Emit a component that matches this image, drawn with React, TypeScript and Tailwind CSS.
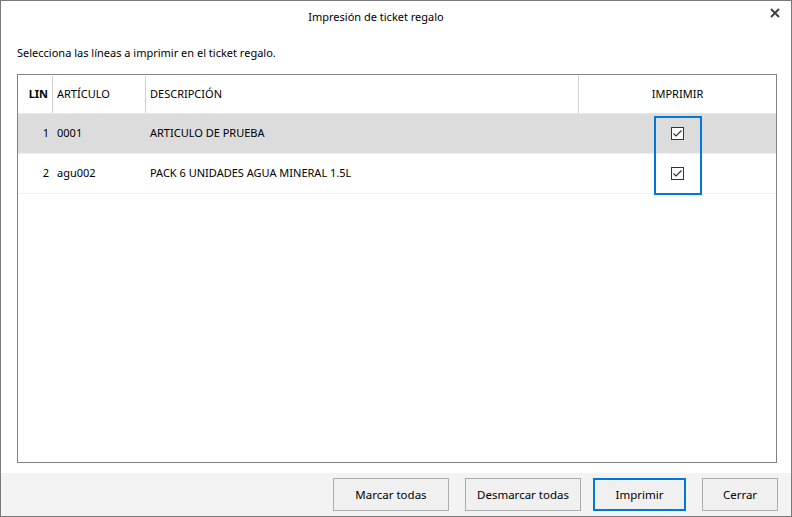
import React from "react";

type Row = { lin: number; articulo: string; descripcion: string; checked: boolean };

const rows: Row[] = [
  { lin: 1, articulo: "0001", descripcion: "ARTICULO DE PRUEBA", checked: true },
  { lin: 2, articulo: "agu002", descripcion: "PACK 6 UNIDADES AGUA MINERAL 1.5L", checked: true },
];

const CheckBox: React.FC<{ checked: boolean }> = ({ checked }) => (
  <div className="w-[13px] h-[13px] border border-[#333333] bg-white flex items-center justify-center">
    {checked && (
      <svg width="11" height="11" viewBox="0 0 11 11">
        <path d="M1.5 5.5 L4 8 L9.5 2.5" fill="none" stroke="#333333" strokeWidth="1.2" />
      </svg>
    )}
  </div>
);

const FooterButton: React.FC<{ label: string; className?: string; focused?: boolean }> = ({
  label,
  className = "",
  focused,
}) => (
  <button
    className={`h-[33px] text-[11.5px] text-black bg-[#f0f0f0] border ${
      focused ? "border-2 border-[#0078d7]" : "border-[#adadad]"
    } ${className}`}
  >
    {label}
  </button>
);

export default function App() {
  return (
    <div
      className="w-[792px] h-[517px] border border-[#7a7a7a] bg-white flex flex-col text-black"
      style={{ fontFamily: '"Noto Sans", "Open Sans", sans-serif' }}
    >
      {/* Title bar */}
      <div className="h-[31px] flex items-center relative">
        <div className="flex-1 flex justify-center pr-[40px] text-[11px] pt-[1px]">Impresión de ticket regalo</div>
        <svg className="absolute right-[11px] top-[7px]" width="10" height="10" viewBox="0 0 10 10">
          <path d="M1 1 L9 9 M9 1 L1 9" stroke="#3c3c3c" strokeWidth="1.8" />
        </svg>
      </div>

      {/* Instructions */}
      <div className="h-[42px] flex items-center px-[16px] pt-[1px] text-[11px]">
        Selecciona las líneas a imprimir en el ticket regalo.
      </div>

      {/* Grid */}
      <div className="ml-[16px] mr-[14px] h-[389px] border border-[#828282] flex flex-col text-[11px]">
        <div className="h-[39px] flex border-b border-[#e6e6e6] pt-[1px]">
          <div className="w-[35px] border-r border-[#d0d0d0] flex items-center justify-end pr-[4px] font-bold">
            LIN
          </div>
          <div className="w-[93px] border-r border-[#d0d0d0] flex items-center pl-[4px]">ARTÍCULO</div>
          <div className="w-[433px] border-r border-[#d0d0d0] flex items-center pl-[4px]">DESCRIPCIÓN</div>
          <div className="flex-1 flex items-center justify-center">IMPRIMIR</div>
        </div>
        <div className="relative">
          {rows.map((r, i) => (
            <div
              key={r.lin}
              className={`h-[40px] flex border-b border-[#f0f0f0] ${i === 0 ? "bg-[#dcdcdc]" : "bg-white"}`}
            >
              <div className="w-[35px] flex items-center justify-end pr-[4px]">{r.lin}</div>
              <div className="w-[93px] flex items-center pl-[4px]">{r.articulo}</div>
              <div className="w-[433px] flex items-center pl-[4px]">{r.descripcion}</div>
              <div className="flex-1 flex items-center justify-center">
                <CheckBox checked={r.checked} />
              </div>
            </div>
          ))}
          {/* cell focus */}
          <div className="absolute left-[636px] top-[2px] w-[48px] h-[79px] border-2 border-[#0078d7]" />
        </div>
      </div>

      <div className="h-[10px]" />

      {/* Footer */}
      <div className="h-[43px] bg-[#f3f3f3] flex justify-end items-start pt-[5px] pr-[13px]">
        <FooterButton label="Marcar todas" className="w-[116px]" />
        <FooterButton label="Desmarcar todas" className="w-[116px] ml-[16px]" />
        <FooterButton label="Imprimir" className="w-[93px] ml-[12px]" focused />
        <FooterButton label="Cerrar" className="w-[76px] ml-[16px]" />
      </div>
    </div>
  );
}
